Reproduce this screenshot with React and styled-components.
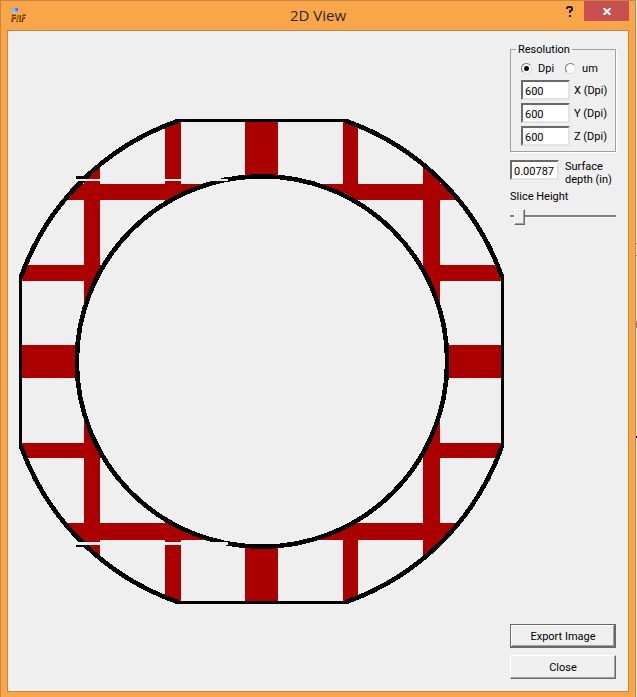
import React, { useState } from "react";
import styled, { createGlobalStyle, css } from "styled-components";

const GlobalStyle = createGlobalStyle`
  * { box-sizing: border-box; }
  html, body, #root { height: 100%; margin: 0; }
  body { background: #ffffff; overflow: hidden; }
`;

const FACE = "#efefef";
const RED = "#aa0000";

const Desktop = styled.div`
  display: flex;
  height: 100%;
`;

const Window = styled.div`
  flex: 1;
  min-width: 0;
  display: flex;
  flex-direction: column;
  padding: 0 6px 5px 6px;
  background: #f9a54a;
  border: solid #c98540;
  border-width: 1px 1px 0 1px;
  font-family: Roboto, sans-serif;
  font-size: 11px;
  line-height: 13px;
  color: #000;
`;

const Behind = styled.div`
  width: 1px;
  height: 100%;
  display: flex;
  flex-direction: column;
  background: #f4f4f4;
`;

const BehindMark = styled.span`
  height: ${(p) => p.$size}px;
  margin-top: ${(p) => p.$gap}px;
  background: ${(p) => p.$color};
`;

const TitleBar = styled.header`
  display: grid;
  grid-template-columns: 74px 1fr 74px;
  height: 29px;
`;

const AppIcon = styled.svg`
  width: 18px;
  height: 18px;
  margin: 5px 0 0 2px;
`;

const Title = styled.h1`
  margin: 0;
  text-align: center;
  font-family: "Open Sans", sans-serif;
  font-size: 15px;
  font-weight: 400;
  line-height: 29px;
  color: #2b2b26;
`;

const Caption = styled.div`
  display: flex;
  justify-content: flex-end;
  align-items: flex-start;
`;

const CaptionButton = styled.button`
  width: ${(p) => (p.$close ? 45 : 28)}px;
  height: 20px;
  padding: 0;
  border: 0;
  display: grid;
  place-items: center;
  background: ${(p) => (p.$close ? "#c75050" : "transparent")};
`;

const Content = styled.main`
  flex: 1;
  min-height: 0;
  display: flex;
  align-items: stretch;
  gap: 6px;
  padding: 0 12px 12px 11px;
  background: ${FACE};
  border: 1px solid #c98540;
`;

const Drawing = styled.svg`
  flex: 1;
  min-width: 0;
  align-self: flex-start;
  margin-top: 88px;
`;

const Side = styled.aside`
  width: 106px;
  display: flex;
  flex-direction: column;
  padding-top: 12px;
`;

const Group = styled.fieldset`
  min-width: 0;
  margin: 0 0 8px;
  padding: 6px 9px 0 10px;
  height: 109px;
  border: 1px solid #a0a0a0;
  box-shadow: 1px 1px 0 #fff;
`;

const Legend = styled.legend`
  margin-left: -5px;
  padding: 0 2px;
`;

const Radios = styled.div`
  display: flex;
  gap: 11px;
  margin-bottom: 5px;
`;

const RadioLabel = styled.label`
  display: flex;
  align-items: center;
  gap: 6px;
`;

const Radio = styled.input`
  appearance: none;
  width: 11px;
  height: 11px;
  margin: 0;
  border-radius: 50%;
  border: 1px solid;
  border-color: #777 #ddd #ddd #777;
  background: #fff;
  &:checked {
    background: radial-gradient(circle, #000 2px, #fff 3px);
  }
`;

const FieldRow = styled.div`
  display: flex;
  align-items: ${(p) => (p.$top ? "flex-start" : "center")};
  gap: ${(p) => (p.$top ? 6 : 4)}px;
  margin-bottom: ${(p) => (p.$top ? 4 : 3)}px;
  white-space: nowrap;
`;

const TextBox = styled.input`
  flex: none;
  width: 49px;
  height: 20px;
  padding: 3px 0 0 2px;
  border: 2px solid;
  border-color: #696969 #e3e3e3 #e3e3e3 #696969;
  border-radius: 0;
  background: #fff;
  font: inherit;
  color: #000;
`;

const Slider = styled.input`
  appearance: none;
  width: 100%;
  height: 17px;
  margin: 5px 0 0;
  background: linear-gradient(#808080, #808080) 0 7px / 100% 2px no-repeat,
    linear-gradient(#fff, #fff) 0 9px / 100% 1px no-repeat;
  &::-webkit-slider-thumb {
    appearance: none;
    width: 11px;
    height: 16px;
    background: ${FACE};
    border: 1px solid;
    border-color: #fff #696969 #696969 #fff;
    box-shadow: inset -1px -1px 0 #a0a0a0;
  }
`;

const Actions = styled.div`
  display: flex;
  flex-direction: column;
  gap: 7px;
  margin-top: auto;
`;

const PushButton = styled.button`
  height: 24px;
  padding: 1px 0 0;
  background: ${FACE};
  border: 1px solid;
  border-color: #fff #696969 #696969 #fff;
  box-shadow: inset -1px -1px 0 #a0a0a0;
  font: inherit;
  color: #000;
  ${(p) =>
    p.$primary &&
    css`
      border-color: #696969;
      box-shadow: inset -1px -1px 0 #696969, inset 1px 1px 0 #fff, inset -2px -2px 0 #a0a0a0;
    `}
`;

const COLUMNS = [[84, 16], [165, 16], [245, 33], [343, 15], [423, 17]];
const ROWS = [[184, 16], [265, 16], [345, 33], [443, 15], [523, 17]];
const OUTLINE =
  "M178 120.5H346A255 255 0 0 1 502.5 277V446A255 255 0 0 1 346 602.5H178A255 255 0 0 1 20.5 446V277A255 255 0 0 1 178 120.5Z";

function SliceDrawing() {
  return (
    <Drawing viewBox="19 119 485 485" shapeRendering="crispEdges" role="img" aria-label="Slice preview">
      <clipPath id="body">
        <path d={OUTLINE} />
      </clipPath>
      <g clipPath="url(#body)" fill={RED}>
        {COLUMNS.map(([x, w]) => (
          <rect key={x} x={x} y="119" width={w} height="485" />
        ))}
        {ROWS.map(([y, h]) => (
          <rect key={y} x="19" y={y} width="485" height={h} />
        ))}
      </g>
      <path d={OUTLINE} fill="none" stroke="#000" strokeWidth="3" />
      <path
        d="M178 121A255 255 0 0 0 21 277M346 121A255 255 0 0 1 502 277M21 446A255 255 0 0 0 178 602M502 446A255 255 0 0 1 346 602"
        fill="none"
        stroke="#000"
        strokeWidth="4.6"
      />
      <circle cx="262" cy="361.5" r="185.2" fill={FACE} stroke="#000" strokeWidth="4.6" />
      <path d="M76 179H228V181H76ZM76 542H228V545H76Z" fill={FACE} />
      <path d="M76 176H88V179H76ZM76 545H87V547H76Z" />
      <path d="M214 181H226V182H214ZM224 177H236V179H224ZM214 541H225V542H214ZM226 545H240V546H226Z" />
    </Drawing>
  );
}

function DpiField({ axis, unit }) {
  const id = `res-${axis}`;
  return (
    <FieldRow>
      <TextBox id={id} defaultValue="600" />
      <label htmlFor={id}>{`${axis} (${unit})`}</label>
    </FieldRow>
  );
}

export default function App() {
  const [unit, setUnit] = useState("Dpi");
  return (
    <Desktop>
      <GlobalStyle />
      <Window>
        <TitleBar>
          <AppIcon viewBox="0 0 18 18" aria-hidden="true">
            <path d="M3 3L6 1L10 2L9 6L6 8L3 6Z" fill="#8bb5ee" />
            <path d="M6 2H9V5H7Z" fill="#5275c4" />
            <path d="M3 6L7 7L6 9Z" fill="#dce5ee" />
            <path d="M3 16L4 9H7M4 12H7M8 16L9 9M9 10L11 10L11 16M13 16L14 9H17M14 12H16" fill="none" stroke="#76430f" strokeWidth="2" />
            <path d="M2 15V8H7M3 11H6M8 15V8H10V15M12 15L13 8H17M13 11H15" fill="none" stroke="#f5a52b" strokeWidth="1" />
          </AppIcon>
          <Title>2D View</Title>
          <Caption>
            <CaptionButton aria-label="Help">
              <svg width="8" height="11" viewBox="0 0 8 11">
                <path d="M1 3V2L2 1H5L6 2V4L4 5V7" fill="none" stroke="#24211c" strokeWidth="2" />
                <path d="M3 9H5V11H3Z" fill="#24211c" />
              </svg>
            </CaptionButton>
            <CaptionButton $close aria-label="Close window">
              <svg width="8" height="7" viewBox="0 0 8 7">
                <path d="M0.5 0L7.5 7M7.5 0L0.5 7" stroke="#fff" strokeWidth="2" />
              </svg>
            </CaptionButton>
          </Caption>
        </TitleBar>
        <Content>
          <SliceDrawing />
          <Side>
            <Group>
              <Legend>Resolution</Legend>
              <Radios>
                {["Dpi", "um"].map((name) => (
                  <RadioLabel key={name}>
                    <Radio type="radio" name="unit" checked={unit === name} onChange={() => setUnit(name)} />
                    {name}
                  </RadioLabel>
                ))}
              </Radios>
              {["X", "Y", "Z"].map((axis) => (
                <DpiField key={axis} axis={axis} unit={unit} />
              ))}
            </Group>
            <FieldRow $top>
              <TextBox id="depth" defaultValue="0.00787" />
              <label htmlFor="depth">
                Surface
                <br />
                depth (in)
              </label>
            </FieldRow>
            <label htmlFor="slice">Slice Height</label>
            <Slider id="slice" type="range" min="0" max="100" defaultValue="4" />
            <Actions>
              <PushButton $primary>Export Image</PushButton>
              <PushButton>Close</PushButton>
            </Actions>
          </Side>
        </Content>
      </Window>
      <Behind>
        <BehindMark $gap={243} $size={1} $color="#888" />
        <BehindMark $gap={11} $size={1} $color="#888" />
        <BehindMark $gap={65} $size={7} $color="#6f94c8" />
        <BehindMark $gap={108} $size={2} $color="#000" />
      </Behind>
    </Desktop>
  );
}
